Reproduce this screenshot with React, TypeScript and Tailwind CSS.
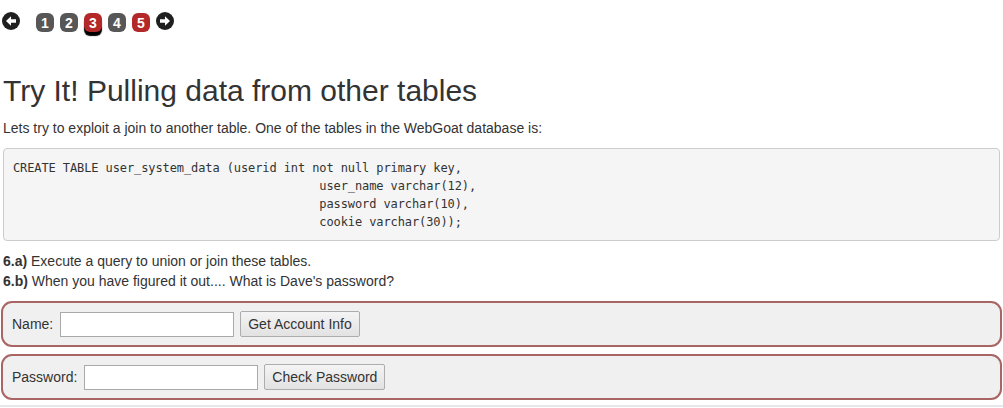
import React from "react";

function ArrowCircle({ dir }: { dir: "left" | "right" }) {
    return (
        <svg width="18" height="18" viewBox="0 0 18 18" className="shrink-0">
            <circle cx="9" cy="9" r="9" fill="#1f1f1f" />
            {dir === "left" ? (
                <path d="M4 9 L9 4.2 L9 7.2 L14 7.2 L14 10.8 L9 10.8 L9 13.8 Z" fill="#fff" />
            ) : (
                <path d="M14 9 L9 4.2 L9 7.2 L4 7.2 L4 10.8 L9 10.8 L9 13.8 Z" fill="#fff" />
            )}
        </svg>
    );
}

const pages = [
    { n: 1, red: false, active: false },
    { n: 2, red: false, active: false },
    { n: 3, red: true, active: true },
    { n: 4, red: false, active: false },
    { n: 5, red: true, active: false },
];

export default function App() {
    return (
        <div className="w-[1003px] h-[408px] bg-white text-[#333] font-['Liberation_Sans',Arial,sans-serif] text-[14px] leading-[20px] overflow-hidden">
            {/* lesson pagination */}
            <div className="flex items-center h-[20px] mt-[11px] pl-[2px]">
                <ArrowCircle dir="left" />
                <div className="flex items-center gap-[6px] ml-[16px] mr-[6px] mt-[3px]">
                    {pages.map((p) => (
                        <span
                            key={p.n}
                            className={
                                "w-[18px] h-[19px] rounded-[6px] flex items-center justify-center text-white text-[14px] font-bold leading-none " +
                                (p.red ? "bg-[#b3292a] " : "bg-[#575757] ") +
                                (p.active ? "shadow-[0_4px_1px_#000]" : "")
                            }
                        >
                            {p.n}
                        </span>
                    ))}
                </div>
                <ArrowCircle dir="right" />
            </div>

            <div className="px-[3px]">
                <h1 className="mt-[43px] mb-[11px] text-[30px] leading-[33px] font-normal text-[#333]">
                    Try It! Pulling data from other tables
                </h1>
                <p className="mb-[10px]">
                    Lets try to exploit a join to another table. One of the tables in the WebGoat database is:
                </p>
                <pre className="mb-[10px] px-[9px] py-[9.5px] bg-[#f5f5f5] border border-[#ccc] rounded-[4px] font-['DejaVu_Sans_Mono','Liberation_Mono',monospace] text-[12px] leading-[18px] text-[#333] tracking-[-0.1px]">
{`CREATE TABLE user_system_data (userid int not null primary key,
                                           user_name varchar(12),
                                           password varchar(10),
                                           cookie varchar(30));`}
                </pre>
                <p>
                    <b>6.a)</b> Execute a query to union or join these tables.
                    <br />
                    <b>6.b)</b> When you have figured it out.... What is Dave's password?
                </p>
            </div>

            <div className="px-[1px] mt-[10px] flex flex-col gap-[7px]">
                <form className="border-2 border-[#a96464] rounded-[11px] bg-[#f0f0f0] px-[9px] py-[8px] flex items-center">
                    <label>Name:</label>
                    <input className="ml-[7px] w-[174px] h-[25px] bg-white border border-[#a9a9a9]" />
                    <button
                        type="button"
                        className="ml-[6px] h-[26px] px-[7px] border border-[#adadad] rounded-[2px] bg-gradient-to-b from-[#f4f4f4] to-[#e2e2e2] text-[14px] text-[#333]"
                    >
                        Get Account Info
                    </button>
                </form>
                <form className="border-2 border-[#a96464] rounded-[11px] bg-[#f0f0f0] px-[9px] py-[8px] flex items-center">
                    <label>Password:</label>
                    <input className="ml-[7px] w-[174px] h-[25px] bg-white border border-[#a9a9a9]" />
                    <button
                        type="button"
                        className="ml-[6px] h-[26px] px-[7px] border border-[#adadad] rounded-[2px] bg-gradient-to-b from-[#f4f4f4] to-[#e2e2e2] text-[14px] text-[#333]"
                    >
                        Check Password
                    </button>
                </form>
            </div>
            <div className="mt-[5px] border-t-2 border-[#e6e6ec]" />
        </div>
    );
}
